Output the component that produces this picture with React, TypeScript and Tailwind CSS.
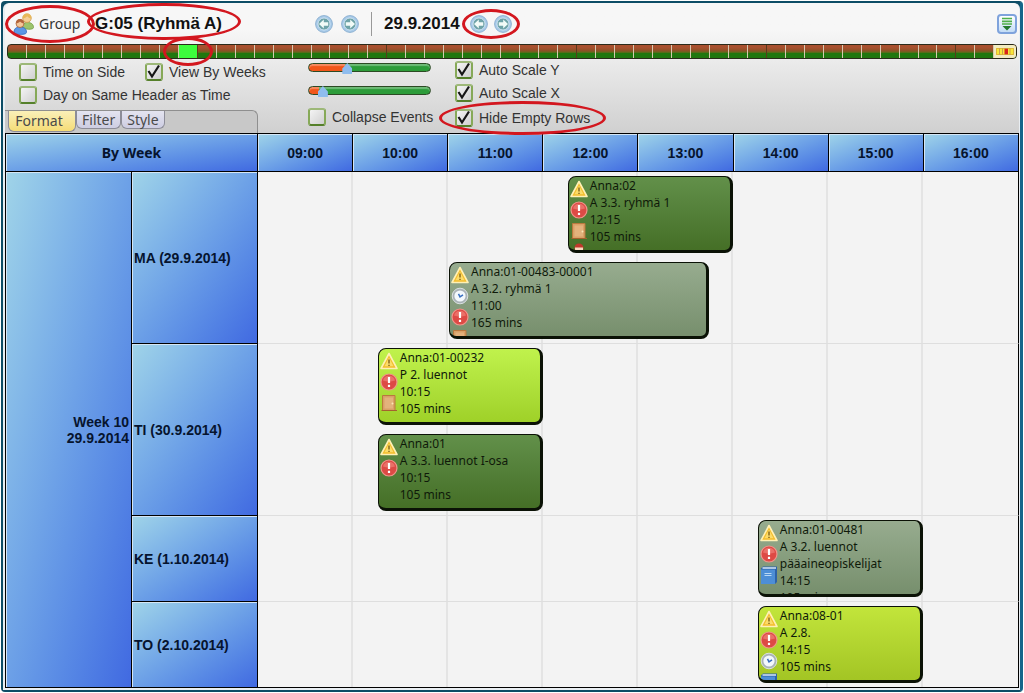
import React, { useState } from 'react';

type IconName = 'warning' | 'error' | 'clock' | 'door' | 'book' | 'person';
type Tone = 'forest' | 'sage' | 'lime' | 'olive';

interface CalendarEvent {
  code: string;
  title: string;
  start: string;
  minutes: number;
  tone: Tone;
  icons: IconName[];
}

interface Day {
  label: string;
  events: CalendarEvent[];
}

const FIRST_HOUR = 9;
const HOURS = ['09:00', '10:00', '11:00', '12:00', '13:00', '14:00', '15:00', '16:00'];
const WEEKS = Array.from({ length: 52 }, (_, i) => i + 1);
const TABS = ['Format', 'Filter', 'Style'];

const DAYS: Day[] = [
  {
    label: 'MA (29.9.2014)',
    events: [
      { code: 'Anna:02', title: 'A 3.3. ryhmä 1', start: '12:15', minutes: 105, tone: 'forest', icons: ['warning', 'error', 'door', 'person'] },
      { code: 'Anna:01-00483-00001', title: 'A 3.2. ryhmä 1', start: '11:00', minutes: 165, tone: 'sage', icons: ['warning', 'clock', 'error', 'door'] },
    ],
  },
  {
    label: 'TI (30.9.2014)',
    events: [
      { code: 'Anna:01-00232', title: 'P 2. luennot', start: '10:15', minutes: 105, tone: 'lime', icons: ['warning', 'error', 'door'] },
      { code: 'Anna:01', title: 'A 3.3. luennot I-osa', start: '10:15', minutes: 105, tone: 'forest', icons: ['warning', 'error'] },
    ],
  },
  {
    label: 'KE (1.10.2014)',
    events: [
      { code: 'Anna:01-00481', title: 'A 3.2. luennot pääaineopiskelijat', start: '14:15', minutes: 105, tone: 'sage', icons: ['warning', 'error', 'book'] },
    ],
  },
  {
    label: 'TO (2.10.2014)',
    events: [
      { code: 'Anna:08-01', title: 'A 2.8.', start: '14:15', minutes: 105, tone: 'olive', icons: ['warning', 'error', 'clock', 'book'] },
    ],
  },
];

const TONES: Record<Tone, string> = {
  forest: 'from-[#62904a] to-[#456f26]',
  sage: 'from-[#97ac8f] to-[#778f6d]',
  lime: 'from-[#c0f24c] to-[#9fd128]',
  olive: 'from-[#c2e53b] to-[#a3c524]',
};

const HEAD_CELL =
  'border-r border-b border-black bg-linear-to-br from-[#a0d4e8] to-[#4169e1] shadow-[inset_1px_1px_0_#d5e6f5] p-0 text-sm font-bold text-[#06142e]';

const EventIcon: React.FC<{ name: IconName }> = ({ name }) => (
  <svg viewBox="0 0 18 18" className="h-[18px] w-[18px] shrink-0" aria-hidden="true">
    {name === 'warning' && (
      <>
        <path d="M9 1.5 17 16.5H1z" fill="#f3bd2c" stroke="#fff0b4" strokeWidth="1.6" strokeLinejoin="round" />
        <path d="M9 5.5 13.5 14.3H4.5z" fill="#fbdc6a" />
        <path d="M9 7.500v4M9 12.800v1.300" stroke="#8a6a1c" strokeWidth="1.500" />
      </>
    )}
    {name === 'error' && (
      <>
        <circle cx="9" cy="9" r="8" fill="#dd4a45" stroke="#f0958c" strokeWidth="1.2" />
        <path d="M3 7.5a6.2 6.2 0 0 1 12 0Q9 9.8 3 7.5" fill="#ef8078" opacity=".7" />
        <path d="M9 4v6M9 11.800v2.200" stroke="#fff" strokeWidth="2.2" />
      </>
    )}
    {name === 'clock' && (
      <>
        <circle cx="9" cy="9" r="7.8" fill="#a9b2b6" stroke="#d9dfe0" />
        <circle cx="9" cy="9" r="5.6" fill="#f3f8fc" />
        <path d="M7.500 6.800 9 9.800 12 7.800" fill="none" stroke="#3a6fc0" strokeWidth="1.5" />
      </>
    )}
    {name === 'door' && (
      <>
        <path d="M2.5 1.5h12.5v15H2.5z" fill="#d9a066" stroke="#b9793f" />
        <path d="M4.5 3.5h8.5v11H4.5z" fill="#e3b27c" />
        <circle cx="12.5" cy="9.5" r="1" fill="#fbe7b5" />
        <path d="M1.5 16.500h15.5" stroke="#a5622f" />
      </>
    )}
    {name === 'book' && (
      <>
        <path d="M1 2.500 3 .5h14v15.500L15 18H1z" fill="#2d62a8" />
        <path d="M1 3.500h14V18H1z" fill="#4d8ed6" />
        <path d="M2.500 2h13.500" stroke="#d8e8f7" strokeWidth="1.300" />
        <path d="M4.500 7.500h7M4.500 9.500h7" stroke="#b9d8f5" />
      </>
    )}
    {name === 'person' && (
      <>
        <circle cx="9" cy="5" r="4.5" fill="#c0392b" />
        <path d="M5 4.500h8v3q-4 3-8 0z" fill="#f6d9bd" />
      </>
    )}
  </svg>
);

const GroupIcon = () => (
  <svg viewBox="0 0 22 22" className="h-[22px] w-[22px]" aria-hidden="true">
    <path d="M9 15c0-4 2-5.500 5.500-5.500s6 1.500 6 5c0 1.200-2 1.800-5 1.800z" fill="#9cc46c" stroke="#6f9c40" strokeWidth=".8" />
    <circle cx="14" cy="5.200" r="4.200" fill="#f4cf96" stroke="#cf9a4a" strokeWidth=".8" />
    <path d="M9.500 5.500c0-3.500 1.800-5 4.500-5s4.500 1.500 4.500 5c-2.200-.3-3.300-1-4.300-2.200-1 1.200-2.500 2-4.700 2.200" fill="#e8b85a" />
    <path d="M1 19.500c0-4 2.200-5.500 6-5.500s6.500 1.500 6.500 5.200c0 1.600-2.200 2.200-6.100 2.200S1 20.900 1 19.500" fill="#5b97e6" stroke="#2f66bc" strokeWidth=".8" />
    <circle cx="7" cy="10.500" r="4" fill="#f4c79a" stroke="#a5603a" strokeWidth=".8" />
    <path d="M3 10.500c0-3 1.600-4.500 4-4.500s4 1.500 4 4.500c-1.800-.3-3-.9-4-2-1 1.100-2.200 1.700-4 2" fill="#b3653c" />
  </svg>
);

const ArrowButton: React.FC<{ direction: 'left' | 'right'; label: string }> = ({ direction, label }) => (
  <button type="button" aria-label={label} className="h-[18px] w-[18px]">
    <svg viewBox="0 0 18 18" className={direction === 'right' ? 'rotate-180' : ''} aria-hidden="true">
      <circle cx="9" cy="9" r="8.4" fill="#a9cbe9" stroke="#8fb2d2" />
      <circle cx="9" cy="9" r="6" fill="#6ea3a8" stroke="#dcebf6" strokeWidth=".8" />
      <path d="M4 9 8.800 4.600v2.600h4.400v3.600H8.800v2.600z" fill="#f2fbf7" />
    </svg>
  </button>
);

// Hand-drawn style highlight around its positioned parent
const Highlight: React.FC<{ className: string }> = ({ className }) => (
  <span className={`pointer-events-none absolute z-10 rounded-[50%] border-[3px] border-[#d3171f] ${className}`} />
);

interface CheckProps {
  label: string;
  defaultChecked?: boolean;
  highlighted?: boolean;
}

const Check: React.FC<CheckProps> = ({ label, defaultChecked, highlighted }) => (
  <label className="relative flex h-[18px] items-center gap-1.5 text-sm whitespace-nowrap text-[#333]">
    <span className="relative h-[18px] w-[18px]">
      <input
        type="checkbox"
        defaultChecked={defaultChecked}
        className="peer block h-[18px] w-[18px] appearance-none rounded-[3px] border-2 border-t-[#9db878] border-r-[#86a958] border-b-[#55802a] border-l-[#86a958] bg-linear-to-br from-[#f4f4f4] to-[#d0d0d0]"
      />
      <svg viewBox="0 0 18 18" className="pointer-events-none absolute inset-0 hidden peer-checked:block" aria-hidden="true">
        <path d="M3.500 8 7 13.500 14 2.500" fill="none" stroke="#161616" strokeWidth="2.2" />
      </svg>
    </span>
    {label}
    {highlighted && <Highlight className="-top-2 -right-4 -bottom-2 -left-4" />}
  </label>
);

const ScaleSlider: React.FC<{ label: string; initial: number }> = ({ label, initial }) => {
  const [value, setValue] = useState<number>(initial);

  return (
    <input
      type="range"
      aria-label={label}
      value={value}
      onChange={(e) => setValue(Number(e.target.value))}
      className="block h-[9px] w-[123px] appearance-none rounded-full border border-[#2c4a24] shadow-[inset_0_2px_1px_#ffffff50] [&::-webkit-slider-thumb]:mt-0.5 [&::-webkit-slider-thumb]:h-[11px] [&::-webkit-slider-thumb]:w-[10px] [&::-webkit-slider-thumb]:appearance-none [&::-webkit-slider-thumb]:bg-[#8fbcee] [&::-webkit-slider-thumb]:[clip-path:polygon(50%_0,100%_50%,100%_100%,0_100%,0_50%)]"
      style={{ background: `linear-gradient(to right, #f2561a ${value}%, #2d9c3a ${value}%)` }}
    />
  );
};

const WeekBar = () => {
  const [current, setCurrent] = useState<number>(10);

  return (
    <div className="mx-0.5 flex h-[15px] rounded-[4px] border border-[#2a2a1a] bg-linear-to-b from-[#a8502e] from-20% via-[#8a5126] via-45% to-[#20770f] to-65%">
      {WEEKS.map((week) => (
        <button
          key={week}
          type="button"
          aria-label={`Week ${week}`}
          onClick={() => setCurrent(week)}
          className={`relative flex-1 border-r ${week % 10 === 0 ? 'border-[#5a3a1c]' : 'border-[#d8c8b0]'} ${
            week === current ? 'bg-[#3dfc3d]' : ''
          }`}
        >
          {week === current && <Highlight className="-inset-x-4 -inset-y-2" />}
        </button>
      ))}
      <button type="button" aria-label="All weeks" className="flex w-[22px] items-center rounded-r-[3px] bg-[#f2ecc0] px-0.5">
        <svg viewBox="0 0 18 7" className="h-[7px] w-[18px]" aria-hidden="true">
          <path d="M0 0h18v7H0z" fill="#f8e838" />
          <path d="M3.500 0v7M6.500 0v7M14 0v7" stroke="#c9a04c" />
          <path d="M8.500 0h3.500v7H8.500z" fill="#d8261c" />
          <path d="M.5.5h17v6H.5z" fill="none" stroke="#d8a93a" strokeWidth=".8" />
        </svg>
      </button>
    </div>
  );
};

const EventCard: React.FC<{ event: CalendarEvent }> = ({ event }) => {
  const [hours, minutes] = event.start.split(':').map(Number);
  const span = HOURS.length * 60;
  const offset = (hours - FIRST_HOUR) * 60 + minutes;

  return (
    <div
      className="relative h-[86px] pt-1 pl-px"
      style={{ marginLeft: `${(offset / span) * 100}%`, width: `${(event.minutes / span) * 100}%` }}
    >
      <div
        className={`flex h-[77px] overflow-hidden rounded-lg border border-r-[3px] border-b-[3px] border-[#0b1206] bg-linear-to-b ${TONES[event.tone]}`}
      >
        <div className="flex w-[21px] shrink-0 flex-col gap-[3px] pt-[3px] pl-px">
          {event.icons.map((icon) => (
            <EventIcon key={icon} name={icon} />
          ))}
        </div>
        <div className="min-w-0 font-['Noto_Sans',sans-serif] text-xs leading-[17px] text-[#0f1a0a]">
          <p>{event.code}</p>
          <p>{event.title}</p>
          <p>{event.start}</p>
          <p>{event.minutes} mins</p>
        </div>
      </div>
    </div>
  );
};

const App: React.FC = () => {
  const [activeTab, setActiveTab] = useState<string>('Format');

  return (
    <div className="bg-white p-px font-['Liberation_Sans',Arial,sans-serif]">
      <div className="rounded-sm border-2 border-r-[3px] border-[#0d4d66] border-r-[#14668a] bg-[#0d4d66]">
        <div className="rounded-t-md bg-[#e9eef2] pr-px pb-0.5 pl-0.5">
          <div className="rounded-t-md bg-linear-to-b from-[#f7f7f7] from-20% to-[#d0d0d0]">
            <header className="flex h-[41px] items-center pr-0.5 pl-2">
              <div className="relative flex w-[82px] items-center gap-1 font-['Noto_Sans',sans-serif] text-sm text-[#333]">
                <GroupIcon />
                Group
                <Highlight className="-top-2 right-0 -bottom-2 -left-2" />
              </div>
              <h1 className="relative w-[130px] text-[17px] font-bold whitespace-nowrap text-[#111]">
                G:05 (Ryhmä A)
                <Highlight className="-right-4 -bottom-1 -left-2 -top-2" />
              </h1>
              <div className="ml-[90px] flex gap-2">
                <ArrowButton direction="left" label="Previous group" />
                <ArrowButton direction="right" label="Next group" />
              </div>
              <div className="mx-3 h-6 border-l border-[#999]" />
              <span className="text-[17px] font-bold text-[#111]">29.9.2014</span>
              <div className="relative ml-2.5 flex gap-1.5">
                <ArrowButton direction="left" label="Previous week" />
                <ArrowButton direction="right" label="Next week" />
                <Highlight className="-inset-x-2 -inset-y-1.5" />
              </div>
              <button
                type="button"
                aria-label="Collapse toolbar"
                className="ml-auto flex h-5 w-5 items-center justify-center rounded-[4px] border-2 border-[#7fa3dc] bg-linear-to-b from-white to-[#c3dcf6]"
              >
                <svg viewBox="0 0 14 14" className="h-[14px] w-[14px]" aria-hidden="true">
                  <path d="M2 1.500h10M2 4.300h10M2 7h10" stroke="#4fb04a" strokeWidth="1.700" />
                  <path d="M2.500 9h9L7 13.500z" fill="#237a2e" />
                </svg>
              </button>
            </header>

            <WeekBar />

            <div className="flex h-[74px]">
              <div className="flex w-[253px] shrink-0 flex-col pt-1">
                <div className="flex gap-5 pl-[14px]">
                  <Check label="Time on Side" />
                  <Check label="View By Weeks" defaultChecked />
                </div>
                <div className="mt-[5px] pl-[14px]">
                  <Check label="Day on Same Header as Time" />
                </div>
                <div
                  role="tablist"
                  className="mt-auto flex h-[23px] items-start rounded-tr-md border-t border-r border-[#8f8f8f] bg-[#c8c8c8] pl-[3px]"
                >
                  {TABS.map((tab) => (
                    <button
                      key={tab}
                      type="button"
                      role="tab"
                      aria-selected={activeTab === tab}
                      onClick={() => setActiveTab(tab)}
                      className={`rounded-b-md border-r border-b border-l border-[#8d8d98] font-['Noto_Sans',sans-serif] text-sm text-[#4a4a4a] ${
                        activeTab === tab
                          ? 'h-[21px] w-[68px] bg-linear-to-b from-[#faf0b8] to-[#f5dc76] pr-1.5'
                          : 'h-[18px] bg-linear-to-b from-[#e4e4f0] to-[#cdcde2] px-[5px] leading-[17px]'
                      }`}
                    >
                      {tab}
                    </button>
                  ))}
                </div>
              </div>

              <div className="ml-[50px] w-[147px] shrink-0 pt-1">
                <div className="flex flex-col gap-3.5">
                  <ScaleSlider label="Vertical scale" initial={30} />
                  <ScaleSlider label="Horizontal scale" initial={8} />
                </div>
                <div className="mt-[13px]">
                  <Check label="Collapse Events" />
                </div>
              </div>

              <div className="flex flex-col gap-[5px] pt-0.5">
                <Check label="Auto Scale Y" defaultChecked />
                <Check label="Auto Scale X" defaultChecked />
                <div className="mt-0.5">
                  <Check label="Hide Empty Rows" defaultChecked highlighted />
                </div>
              </div>
            </div>
          </div>

          <table className="w-full table-fixed border-separate border-spacing-0 border-t border-l border-black bg-[#f3f3f3]">
            <colgroup>
              <col className="w-[126px]" />
              <col className="w-[126px]" />
              {HOURS.map((hour) => (
                <col key={hour} />
              ))}
            </colgroup>
            <thead>
              <tr className="h-[38px]">
                <th colSpan={2} className={`${HEAD_CELL} font-['Noto_Sans',sans-serif]`}>
                  By Week
                </th>
                {HOURS.map((hour) => (
                  <th key={hour} scope="col" className={HEAD_CELL}>
                    {hour}
                  </th>
                ))}
              </tr>
            </thead>
            <tbody>
              {DAYS.map((day, index) => (
                <tr key={day.label}>
                  {index === 0 && (
                    <th scope="rowgroup" rowSpan={DAYS.length} className={`${HEAD_CELL} pr-0.5 text-right leading-4`}>
                      Week 10
                      <br />
                      29.9.2014
                    </th>
                  )}
                  <th scope="row" className={`${HEAD_CELL} pl-0.5 text-left`}>
                    {day.label}
                  </th>
                  <td
                    colSpan={HOURS.length}
                    className={`relative border-r border-b border-r-black p-0 ${
                      index === DAYS.length - 1 ? 'border-b-black' : 'border-b-[#dedede]'
                    }`}
                  >
                    <div className="absolute inset-0 grid grid-cols-8 divide-x-2 divide-[#e4e4e4]">
                      {HOURS.map((hour) => (
                        <div key={hour} />
                      ))}
                    </div>
                    <div className="-mb-px">
                      {day.events.map((event) => (
                        <EventCard key={event.code} event={event} />
                      ))}
                    </div>
                  </td>
                </tr>
              ))}
            </tbody>
          </table>
        </div>
      </div>
    </div>
  );
};

export default App;
